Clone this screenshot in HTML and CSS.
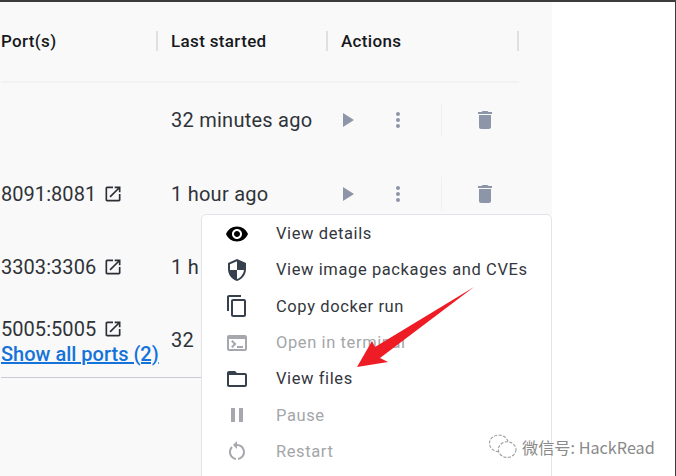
FILE: index.html
```html
<!DOCTYPE html>
<html lang="en">
<head>
<meta charset="utf-8">
<title>Containers</title>
<link rel="stylesheet" href="styles.css">
</head>
<body>
<div class="frame">
  <main class="panel">
    <div class="table">
      <div class="row head">
        <div class="cell port"><span>Port(s)</span><i class="sep"></i></div>
        <div class="cell started"><span>Last started</span><i class="sep"></i></div>
        <div class="cell actions-h"><span>Actions</span><i class="sep"></i></div>
      </div>
      <div class="row r1">
        <div class="cell port"></div>
        <div class="cell started">32 minutes ago</div>
        <div class="cell actions">
          <svg class="ic play" viewBox="0 0 24 24"><path d="M8 5v14l11-7z"/></svg>
          <svg class="ic more" viewBox="0 0 24 24"><path d="M12 8c1.1 0 2-.9 2-2s-.9-2-2-2-2 .9-2 2 .9 2 2 2zm0 2c-1.1 0-2 .9-2 2s.9 2 2 2 2-.9 2-2-.9-2-2-2zm0 6c-1.1 0-2 .9-2 2s.9 2 2 2 2-.9 2-2-.9-2-2-2z"/></svg>
          <i class="vline"></i>
          <svg class="ic trash" viewBox="0 0 24 24"><path d="M6 19c0 1.1.9 2 2 2h8c1.1 0 2-.9 2-2V7H6v12zM19 4h-3.5l-1-1h-5l-1 1H5v2h14V4z"/></svg>
        </div>
      </div>
      <div class="row r2">
        <div class="cell port"><span class="pt">8091:8081</span><svg class="ext" viewBox="0 0 24 24"><path d="M19 19H5V5h7V3H5c-1.11 0-2 .9-2 2v14c0 1.1.89 2 2 2h14c1.1 0 2-.9 2-2v-7h-2v7zM14 3v2h3.59l-9.83 9.83 1.41 1.41L19 6.41V10h2V3h-7z"/></svg></div>
        <div class="cell started">1 hour ago</div>
        <div class="cell actions">
          <svg class="ic play" viewBox="0 0 24 24"><path d="M8 5v14l11-7z"/></svg>
          <svg class="ic more" viewBox="0 0 24 24"><path d="M12 8c1.1 0 2-.9 2-2s-.9-2-2-2-2 .9-2 2 .9 2 2 2zm0 2c-1.1 0-2 .9-2 2s.9 2 2 2 2-.9 2-2-.9-2-2-2zm0 6c-1.1 0-2 .9-2 2s.9 2 2 2 2-.9 2-2-.9-2-2-2z"/></svg>
          <i class="vline"></i>
          <svg class="ic trash" viewBox="0 0 24 24"><path d="M6 19c0 1.1.9 2 2 2h8c1.1 0 2-.9 2-2V7H6v12zM19 4h-3.5l-1-1h-5l-1 1H5v2h14V4z"/></svg>
        </div>
      </div>
      <div class="row r3">
        <div class="cell port"><span class="pt">3303:3306</span><svg class="ext" viewBox="0 0 24 24"><path d="M19 19H5V5h7V3H5c-1.11 0-2 .9-2 2v14c0 1.1.89 2 2 2h14c1.1 0 2-.9 2-2v-7h-2v7zM14 3v2h3.59l-9.83 9.83 1.41 1.41L19 6.41V10h2V3h-7z"/></svg></div>
        <div class="cell started">1 h</div>
      </div>
      <div class="row r4">
        <div class="cell port stack">
          <div class="line"><span class="pt">5005:5005</span><svg class="ext" viewBox="0 0 24 24"><path d="M19 19H5V5h7V3H5c-1.11 0-2 .9-2 2v14c0 1.1.89 2 2 2h14c1.1 0 2-.9 2-2v-7h-2v7zM14 3v2h3.59l-9.83 9.83 1.41 1.41L19 6.41V10h2V3h-7z"/></svg></div>
          <a class="all" href="#">Show all ports (2)</a>
        </div>
        <div class="cell started">32</div>
      </div>
    </div>
    <div class="rule"></div>
  </main>

  <ul class="menu">
    <li class="item"><svg class="mi black" viewBox="0 0 24 24"><path d="M12 4.5C7 4.5 2.73 7.61 1 12c1.73 4.39 6 7.5 11 7.5s9.27-3.11 11-7.5c-1.73-4.39-6-7.5-11-7.5zM12 17c-2.76 0-5-2.24-5-5s2.24-5 5-5 5 2.24 5 5-2.24 5-5 5zm0-8c-1.66 0-3 1.34-3 3s1.34 3 3 3 3-1.34 3-3-1.34-3-3-3z"/></svg><span>View details</span></li>
    <li class="item"><svg class="mi" viewBox="0 0 24 24"><path d="M12 1L3 5v6c0 5.55 3.84 10.74 9 12 5.16-1.26 9-6.45 9-12V5l-9-4zm0 10.99h7c-.53 4.12-3.28 7.79-7 8.94V12H5V6.3l7-3.11v8.8z"/></svg><span>View image packages and CVEs</span></li>
    <li class="item"><svg class="mi" viewBox="0 0 24 24"><path d="M16 1H4c-1.1 0-2 .9-2 2v14h2V3h12V1zm3 4H8c-1.1 0-2 .9-2 2v14c0 1.1.9 2 2 2h11c1.1 0 2-.9 2-2V7c0-1.1-.9-2-2-2zm0 16H8V7h11v14z"/></svg><span>Copy docker run</span></li>
    <li class="item off"><svg class="mi" viewBox="0 0 24 24"><path d="M20 4H4c-1.1 0-2 .9-2 2v12c0 1.1.9 2 2 2h16c1.1 0 2-.9 2-2V6c0-1.1-.9-2-2-2zm0 14H4V8h16v10zm-2-1h-6v-2h6v2zM7.5 17l-1.41-1.41L8.67 13l-2.59-2.59L7.5 9l4 4-4 4z"/></svg><span>Open in terminal</span></li>
    <li class="item"><svg class="mi" viewBox="0 0 24 24"><path d="M20 6h-8l-2-2H4c-1.1 0-1.99.9-1.99 2L2 18c0 1.1.9 2 2 2h16c1.1 0 2-.9 2-2V8c0-1.1-.9-2-2-2zm0 12H4V8h16v10z"/></svg><span>View files</span></li>
    <li class="item off"><svg class="mi" viewBox="0 0 24 24"><path d="M6 19h4V5H6v14zm8-14v14h4V5h-4z"/></svg><span>Pause</span></li>
    <li class="item off"><svg class="mi" viewBox="0 0 24 24"><path d="M12 5V2L8 6l4 4V7c3.31 0 6 2.69 6 6 0 2.97-2.16 5.43-5 5.91v2.02c3.95-.49 7-3.85 7-7.93 0-4.42-3.58-8-8-8zm-6 8c0-1.65.67-3.15 1.76-4.24L6.34 7.34C4.9 8.79 4 10.79 4 13c0 4.08 3.05 7.44 7 7.93v-2.02c-2.84-.48-5-2.94-5-5.91z"/></svg><span>Restart</span></li>
  </ul>

  <svg class="arrow" viewBox="0 0 120 84"><polygon points="117,4 18,64 15,58 0,84 31,79 23,75" fill="#ee1c25"/></svg>

  <div class="mark">
    <svg class="wx" viewBox="0 0 28 26"><g fill="#fff" stroke="#9a9a9a" stroke-width="1" stroke-dasharray="3 1.4"><ellipse cx="10" cy="10" rx="9" ry="8"/><ellipse cx="18" cy="16" rx="8.5" ry="7.5"/></g></svg>
    <span class="mark-t">微信号: HackRead</span>
  </div>
</div>
</body>
</html>
```

FILE: styles.css
```css
* { box-sizing: border-box; }
html, body { margin: 0; padding: 0; background: #fff; }
body { width: 676px; height: 476px; overflow: hidden; font-family: Roboto, "Liberation Sans", sans-serif; color: #2f3338; }
.frame { position: relative; width: 676px; height: 476px; border-top: 2px solid #3c3c3c; border-right: 1px solid #3c3c3c; overflow: hidden; }
.panel { width: 552px; height: 474px; background: #f9f9fa; padding-left: 1px; }
.table { width: 518px; }
.row { display: grid; grid-template-columns: 170px 170px 1fr; align-items: center; }
.cell { display: flex; align-items: center; position: relative; font-size: 20px; letter-spacing: .25px; white-space: nowrap; }
.head { height: 81px; padding-bottom: 2px; border-bottom: 2px solid #f2f2f3; }
.head .cell { font-size: 17px; font-weight: 500; letter-spacing: .35px; color: #17191c; height: 20px; }
.sep { position: absolute; right: 13px; top: 0; width: 2px; height: 20px; background: #dfe0e3; }
.actions-h .sep { right: 0; }
.r1 { height: 74px; }
.r2 { height: 73px; }
.r3 { height: 73px; }
.r4 { height: 74px; }
.port { letter-spacing: .05px; }
.pt { margin-right: 7px; }
.ext { width: 20px; height: 20px; fill: #2b2e33; flex: none; }
.stack { display: block; margin-top: 3px; }
.line { display: flex; align-items: center; height: 24px; }
.all { display: block; color: #1472d8; font-size: 20px; font-weight: 500; letter-spacing: 0; line-height: 24px; margin-top: 1px; }
.actions { display: flex; align-items: center; height: 34px; }
.ic { fill: #8d95a8; flex: none; display: block; }
.play { width: 24px; height: 24px; margin-left: -6px; }
.more { width: 24px; height: 24px; margin-left: 27px; }
.vline { width: 1px; height: 34px; background: #f0f0f2; margin-left: 31px; flex: none; }
.trash { width: 24px; height: 24px; margin-left: 31px; }
.rule { width: 200px; height: 1px; background: #c9cad6; }
.menu { position: absolute; left: 201px; top: 212px; width: 351px; height: 280px; margin: 0; padding: .5px 0 0; list-style: none; background: #fff; border: 1.5px solid #e3e4ea; border-right-width: 1px; border-radius: 5px; }
.item { display: flex; align-items: center; height: 36.3px; padding-left: 23px; font-size: 16.5px; letter-spacing: .6px; color: #33373d; white-space: nowrap; }
.mi { width: 24px; height: 24px; fill: #37404d; flex: none; margin-right: 27px; }
.mi.black { fill: #000; }
.off { color: #a4a6aa; }
.off .mi { fill: #a6a8ad; }
.arrow { position: absolute; left: 357px; top: 281px; width: 120px; height: 84px; }
.mark { position: absolute; left: 488px; top: 431px; display: flex; align-items: center; gap: 4px; }
.wx { width: 30px; height: 27px; display: block; }
.mark-t { font-family: "Noto Sans CJK SC", "Liberation Sans", sans-serif; font-size: 16.2px; color: #8a8a8a; text-shadow: 0 0 1px #fff; white-space: nowrap; }
```
